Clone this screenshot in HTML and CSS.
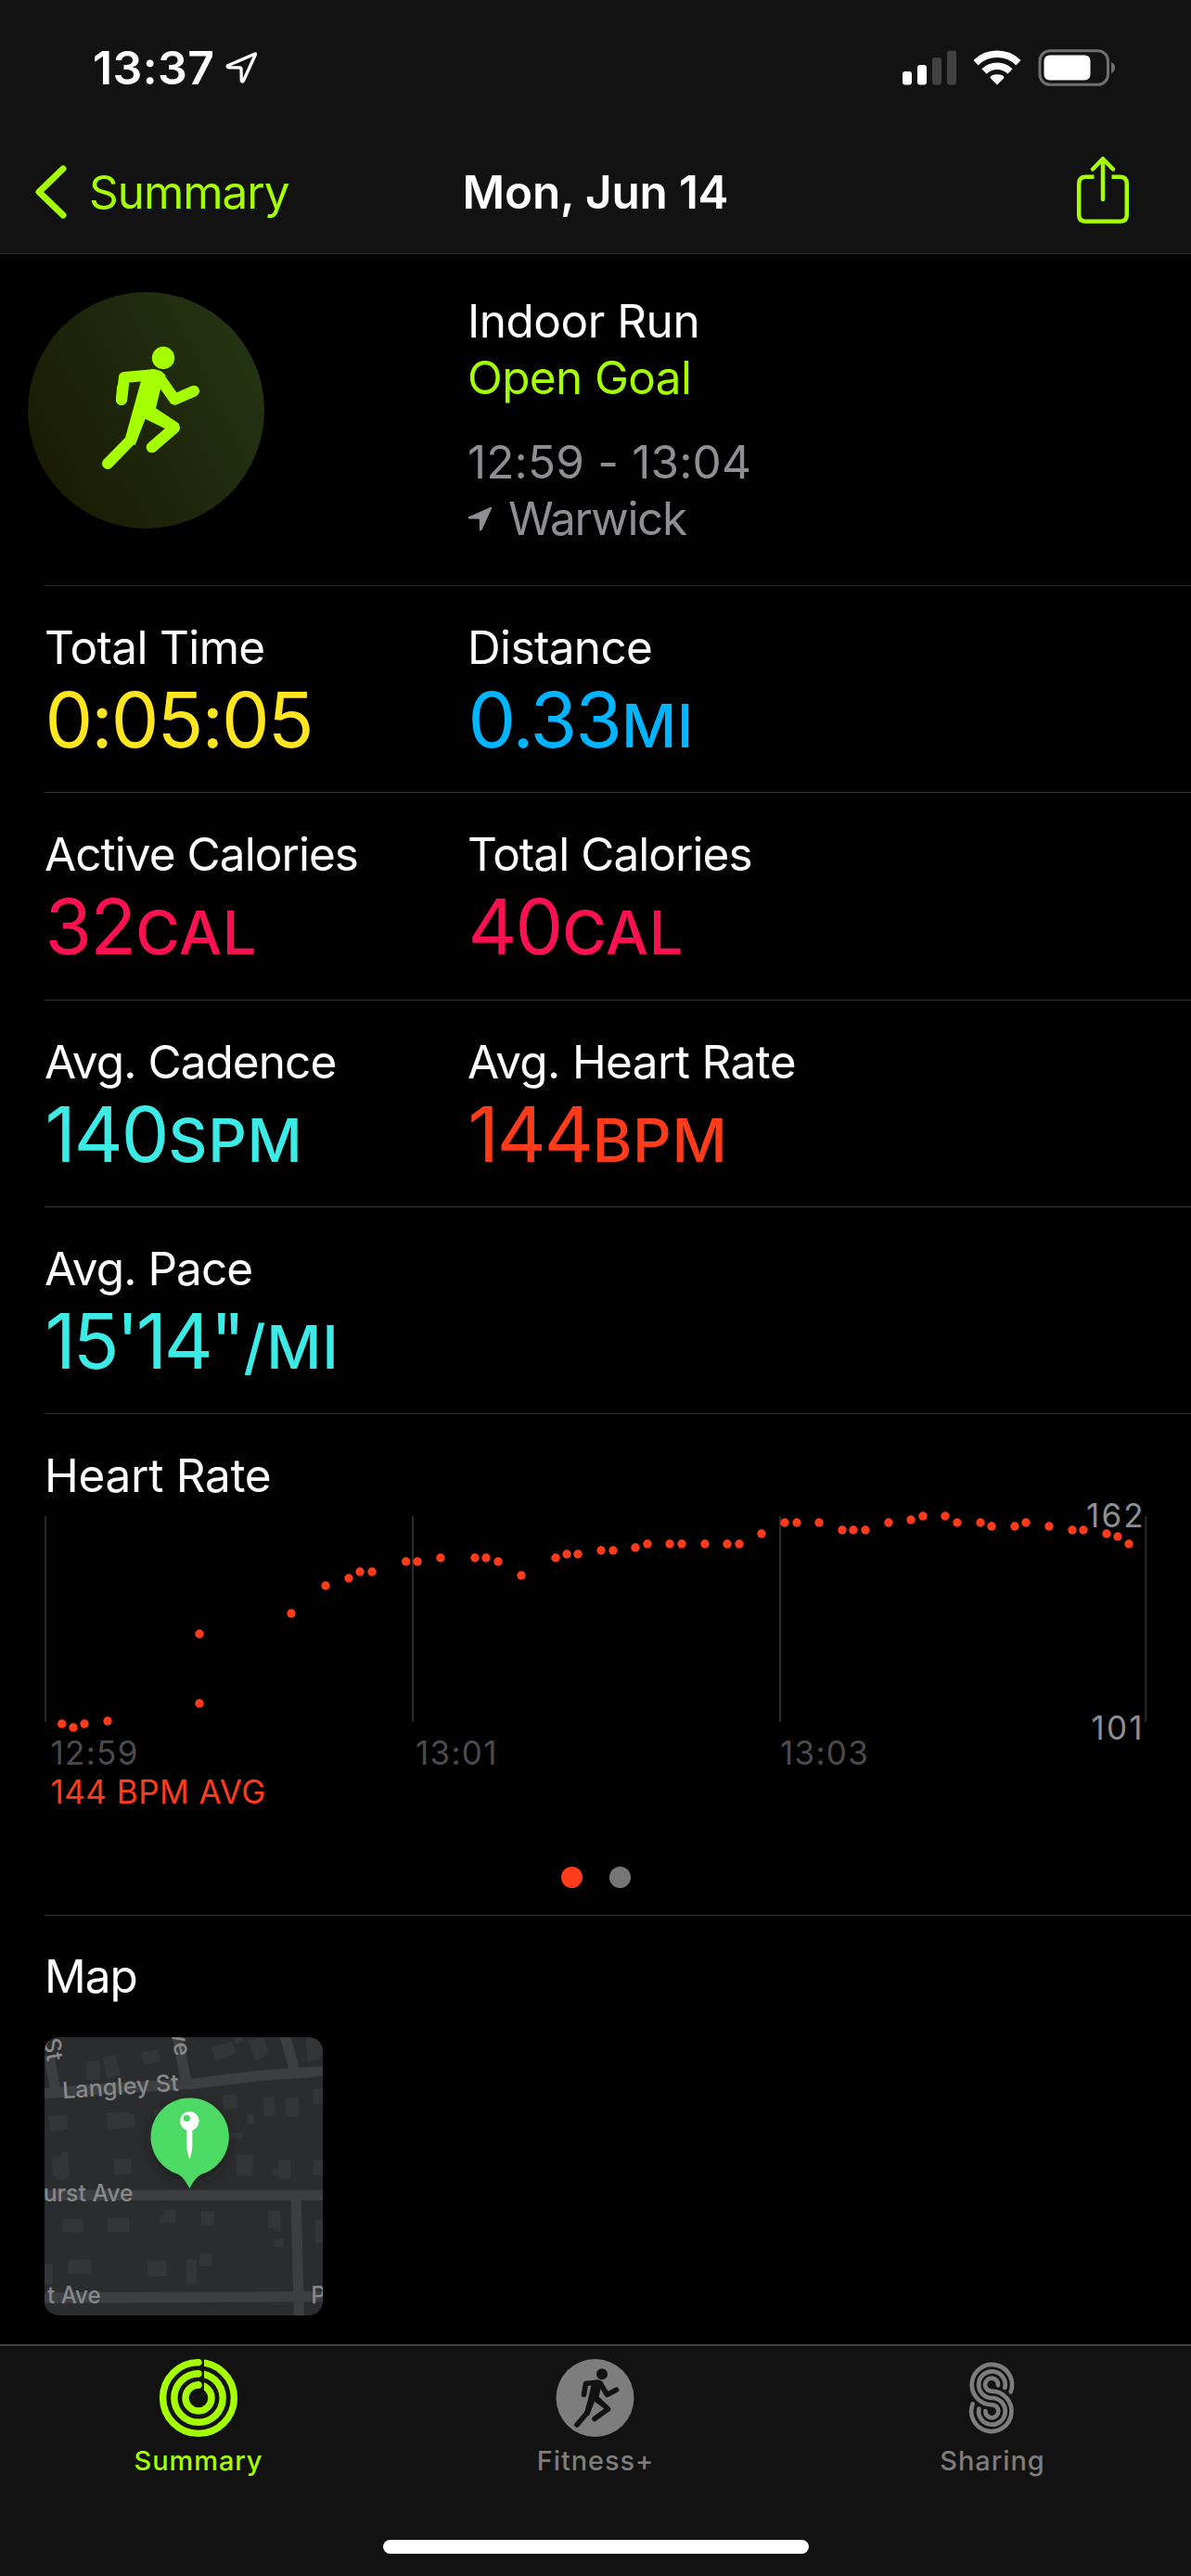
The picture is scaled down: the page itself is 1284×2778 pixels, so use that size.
FILE: index.html
```
<!DOCTYPE html>
<html lang="en">
<head>
    <meta charset="UTF-8">
    <meta name="viewport" content="width=device-width, initial-scale=1.0">
    <title>Workout Summary</title>
    <link rel="stylesheet" href="styles.css">
</head>
<body>
    <header class="header">
        <div class="status-bar">
            <span class="clock">13:37</span>
            <svg class="location" width="36" height="36" viewBox="0 0 36 36">
                <path d="M33 3 L3.500 15.800 Q2.500 17.300 4.500 17.800 L16.500 18 Q18 18 18 19.500 L18.300 32 Q19.200 34 20.500 32 L33.300 4 Q33.800 2.800 33 3 Z" fill="none" stroke="#fff" stroke-width="3.300" stroke-linejoin="round"/>
            </svg>
            <div class="status-icons">
                <svg width="58" height="38" viewBox="0 0 58 38">
                    <rect x="0" y="23" width="10" height="14.500" rx="3" fill="#fff"/>
                    <rect x="16" y="16" width="10" height="21.500" rx="3" fill="#fff"/>
                    <rect x="32" y="8" width="10" height="29.500" rx="3" fill="#414141"/>
                    <rect x="48" y="0.500" width="10" height="37" rx="3" fill="#414141"/>
                </svg>
                <svg width="52" height="38" viewBox="0 0 52 38">
                    <path d="M3 13.700 A33 33 0 0 1 49 13.700" fill="none" stroke="#fff" stroke-width="7.500"/>
                    <path d="M12 23 A20 20 0 0 1 40 23" fill="none" stroke="#fff" stroke-width="7.500"/>
                    <path d="M26 37.500 L18.500 30 Q18.500 26.300 26 26.300 Q33.500 26.300 33.500 30 Z" fill="#fff"/>
                </svg>
                <svg width="84" height="40" viewBox="0 0 84 40">
                    <rect x="2" y="1.700" width="73.500" height="36.600" rx="11" fill="none" stroke="#707070" stroke-width="3"/>
                    <rect x="6.500" y="6.500" width="50" height="27" rx="6" fill="#fff"/>
                    <path d="M79 14 Q83 15.500 83 20 Q83 24.500 79 26 Z" fill="#707070"/>
                </svg>
            </div>
        </div>
        <nav class="nav-bar">
            <a class="back">
                <svg width="36" height="58" viewBox="0 0 36 58">
                    <path d="M31 4 L5 29 L31 54" fill="none" stroke="#a6ff00" stroke-width="7" stroke-linecap="round" stroke-linejoin="round"/>
                </svg>
                <span>Summary</span>
            </a>
            <h1 class="title">Mon, Jun 14</h1>
            <svg class="share" width="58" height="74" viewBox="0 0 58 74">
                <g fill="none" stroke="#a6ff00" stroke-width="4.500" stroke-linecap="round" stroke-linejoin="round">
                    <path d="M19.500 22.700 H10.500 Q3.200 22.700 3.200 30 V63.500 Q3.200 70.800 10.500 70.800 H47.500 Q54.800 70.800 54.800 63.500 V30 Q54.800 22.700 47.500 22.700 H38.500" stroke-linecap="butt"/>
                    <path d="M29 47 V3.500 M18 14.500 L29 3.200 L40 14.500"/>
                </g>
            </svg>
        </nav>
    </header>

    <main class="content">
        <section class="workout">
            <div class="badge">
                <svg width="255" height="255" viewBox="90 75 765 765">
                    <g fill="#a6ff00" stroke="none">
                        <circle cx="528" cy="288" r="36.500"/>
                        <path d="M456 362 L405 547 L437 571 L470 485 L540 520 L580 503 Q578 500 572 496 L504 451 L520 385 L536 345 Q520 324 490 324 Z"/>
                    </g>
                    <g fill="none" stroke="#a6ff00" stroke-width="36" stroke-linecap="round" stroke-linejoin="round">
                        <path d="M393 423 L402 351 L493 343"/>
                        <path d="M393 423 L396 385"/>
                        <path d="M512 347 L565 422 L627 395"/>
                        <path d="M560 512 L564 514 L491 577"/>
                        <path d="M420 556 L348 630"/>
                    </g>
                </svg>
            </div>
            <div class="workout-info">
                <div class="label run">Indoor Run</div>
                <div class="label goal">Open Goal</div>
                <div class="label muted time">12:59 - 13:04</div>
                <div class="label muted place">
                    <svg width="27" height="28" viewBox="0 0 27 28">
                        <path d="M24.500 1 Q26.500 0.300 26 2.500 L15.500 25.500 Q14 27.500 13 25.500 L12.800 14.500 Q12.800 13.800 12 13.800 L1.500 13.500 Q-0.500 12.500 1.500 11.300 Z" fill="#8e8e93"/>
                    </svg>
                    <span>Warwick</span>
                </div>
            </div>
        </section>

        <section class="row">
            <div class="metric">
                <div class="label">Total Time</div>
                <div class="value yellow">0:05:05</div>
            </div>
            <div class="metric">
                <div class="label">Distance</div>
                <div class="value blue">0.33<span class="unit">MI</span></div>
            </div>
        </section>
        <section class="row">
            <div class="metric">
                <div class="label tight">Active Calories</div>
                <div class="value pink">32<span class="unit">CAL</span></div>
            </div>
            <div class="metric">
                <div class="label tight">Total Calories</div>
                <div class="value pink">40<span class="unit">CAL</span></div>
            </div>
        </section>
        <section class="row">
            <div class="metric">
                <div class="label tight">Avg. Cadence</div>
                <div class="value cyan">140<span class="unit">SPM</span></div>
            </div>
            <div class="metric">
                <div class="label">Avg. Heart Rate</div>
                <div class="value red">144<span class="unit">BPM</span></div>
            </div>
        </section>
        <section class="row">
            <div class="metric">
                <div class="label tight">Avg. Pace</div>
                <div class="value cyan pace">15'14"<span class="unit">/MI</span></div>
            </div>
        </section>

        <section class="heart-rate">
            <h2 class="label loose">Heart Rate</h2>
            <svg id="chart" class="chart" width="1236" height="340" viewBox="48 1620 1236 340">
                <g class="grid-lines">
                    <path d="M48.800 1635 V1857 M445 1635 V1857 M841 1635 V1857 M1235.300 1635 V1857"/>
                </g>
                <g id="dots" fill="#ff3b1b"></g>
                <g class="axis">
                    <text x="54.500" y="1903">12:59</text>
                    <text x="448" y="1903">13:01</text>
                    <text x="841" y="1903">13:03</text>
                </g>
                <g class="range">
                    <text x="1171" y="1647">162</text>
                    <text x="1176.500" y="1876">101</text>
                </g>
                <text class="average" x="54.500" y="1945">144 BPM AVG</text>
            </svg>
            <div class="pager">
                <span class="page active"></span>
                <span class="page"></span>
            </div>
        </section>

        <section class="map-section">
            <h2 class="label tight">Map</h2>
            <svg class="map" width="300" height="300" viewBox="144 411 900 900">
                <defs>
                    <filter id="shadow" x="-50%" y="-50%" width="200%" height="200%">
                        <feGaussianBlur stdDeviation="16"/>
                    </filter>
                </defs>
                <rect x="144" y="411" width="900" height="900" fill="#2b2c2e"/>
                <g fill="#343537">
                    <path d="M276 491 L321 488 L325 547 L281 550 Z M332 477 L374 467 L388 535 L346 546 Z M457 460 L511 450 L518 490 L465 501 Z"/>
                    <path d="M685 443 L752 424 L764 463 L698 489 Z M753 414 L785 411 L789 423 L762 433 Z M803 423 L850 408 L867 455 L850 478 L826 487 Z M988 415 L1044 411 V467 L1028 485 L996 487 Z"/>
                    <path d="M157 667 L216 661 L220 709 L162 716 Z M345 657 L398 652 L434 660 L438 697 L424 704 L349 711 Z M718 600 L764 594 L769 639 L724 645 Z M850 607 L887 604 L891 665 L855 668 Z M921 608 L965 605 L970 667 L926 669 Z M1010 580 L1044 575 V625 L1014 627 Z M798 660 H822 V690 H798 Z M735 722 L784 719 V738 L738 740 Z"/>
                    <path d="M167 797 L197 795 V779 H219 L225 855 L209 872 H183 V862 L170 860 Z M369 804 H424 V854 H369 Z M767 788 L819 793 L814 861 L763 855 Z M900 807 H939 V868 L902 870 V857 L880 855 V838 L900 836 Z M1012 808 H1044 V856 H1012 Z M498 645 L530 640 V670 H500 Z"/>
                    <path d="M203 997 L271 999 V1044 L202 1042 Z M348 996 H418 V1041 H348 Z M516 988 L531 986 V970 H567 V1012 L517 1014 Z M651 975 H693 V1020 H651 Z M867 973 L906 971 L909 1038 H886 V1029 H867 Z M888 1063 H918 V1090 H888 Z M1020 1002 H1044 V1078 H1019 Z"/>
                    <path d="M222 1129 L296 1131 V1179 L221 1177 Z M144 1143 H171 V1211 H144 Z M477 1135 L537 1133 L540 1185 H478 Z M602 1128 L636 1130 V1208 L600 1206 Z M646 1109 H685 V1152 H645 Z"/>
                </g>
                <g fill="none" stroke="#3d3e42" stroke-width="34">
                    <path d="M144 593 L360 576 L620 562 L840 535 L1044 521"/>
                    <path d="M158 470 L182 590 M572 400 L603 560 M920 400 L955 525"/>
                    <path d="M144 922 H1044 M144 1254 L1044 1250 M957 925 L967 1311"/>
                </g>
                <g class="street">
                    <text transform="translate(203 610) rotate(-4)" textLength="378" lengthAdjust="spacingAndGlyphs">Langley St</text>
                    <text x="140" y="941" textLength="291" lengthAdjust="spacingAndGlyphs">urst Ave</text>
                    <text x="153" y="1273" textLength="173" lengthAdjust="spacingAndGlyphs">t Ave</text>
                    <text x="1006" y="1271">P</text>
                    <text transform="translate(140 418) rotate(80)">St</text>
                    <text transform="translate(552 390) rotate(80)">ve</text>
                </g>
                <circle cx="613" cy="750" r="128" fill="#151618" opacity="0.550" filter="url(#shadow)"/>
                <path d="M613 900 Q597 868 578 855 A126.500 126.500 0 1 1 650 855 Q629 868 613 900 Z" fill="#4cda64"/>
                <path d="M604 705 H622 V765 Q620 790 613 805 Q606 790 604 765 Z" fill="#fff"/>
                <circle cx="613" cy="682" r="31" fill="#fff"/>
                <circle cx="604" cy="673" r="11" fill="#4cda64"/>
            </svg>
        </section>
    </main>

    <footer class="tab-bar">
        <div class="tabs">
            <div class="tab selected">
                <svg width="86" height="86" viewBox="0 0 86 86">
                    <g fill="none" stroke="#a6ff00" stroke-width="7.400">
                        <circle cx="43" cy="43" r="38.400"/>
                        <circle cx="43" cy="43" r="26.200"/>
                        <circle cx="43" cy="43" r="14"/>
                    </g>
                    <path d="M46.500 0 V36" stroke="#121212" stroke-width="5"/>
                    <g fill="#a6ff00">
                        <circle cx="43" cy="4.600" r="3.700"/>
                        <circle cx="43" cy="16.800" r="3.700"/>
                        <circle cx="43" cy="29" r="3.700"/>
                    </g>
                </svg>
                <span>Summary</span>
            </div>
            <div class="tab">
                <svg width="86" height="86" viewBox="0 0 86 86">
                    <circle cx="42.500" cy="43" r="42" fill="#7d7d7d"/>
                    <circle cx="50" cy="17.200" r="6" fill="#121212"/>
                    <path d="M38.500 29 L35 44 L31 59 L36 62 L42 47 L49 52 L56 53 L46.500 42 L50 27 L46 24 Z" fill="#121212"/>
                    <g fill="none" stroke="#121212" stroke-width="5.600" stroke-linecap="round" stroke-linejoin="round">
                        <path d="M30.500 39.500 L32.500 27.500 L46 26"/>
                        <path d="M48 27 L55.500 39.500 L65.500 34.300"/>
                        <path d="M46 45 L56.500 55 L42 65.500"/>
                        <path d="M34 59 L23 72"/>
                    </g>
                </svg>
                <span>Fitness+</span>
            </div>
            <div class="tab">
                <svg width="86" height="86" viewBox="200 69 258 258">
                    <g fill="none" stroke="#7d7d7d" stroke-width="14" stroke-linecap="round">
                        <path d="M388 178 A65 65 0 1 0 327 220 A21 21 0 1 1 306 240"/>
                        <path d="M369 165 A43 43 0 1 0 327 198 A43 43 0 1 1 285 233"/>
                        <path d="M347 157 A21 21 0 1 0 327 176 A65 65 0 1 1 265 217"/>
                    </g>
                </svg>
                <span>Sharing</span>
            </div>
        </div>
        <div class="home-indicator"></div>
    </footer>

    <script>
        // heart rate samples as [x, y] on the chart
        const samples = [
            [66.7, 1859], [79, 1863], [91, 1859], [116, 1856], [215, 1837], [215, 1762], [314, 1740], [351, 1710],
            [376, 1702], [388, 1695], [401, 1695], [437.7, 1684], [450, 1684], [475, 1680], [512, 1680], [524, 1680],
            [537, 1684], [562, 1699], [599, 1680], [611, 1676], [623, 1676], [648, 1672], [661, 1672], [685, 1669],
            [698, 1665], [722, 1665], [735, 1665], [760, 1665], [784, 1665], [797, 1665], [821, 1654], [846, 1642],
            [859, 1642], [883, 1642], [908, 1650], [920, 1650], [933, 1650], [958, 1642], [982, 1639], [995, 1635],
            [1019, 1635], [1032, 1642], [1057, 1642], [1069, 1646], [1094, 1646], [1106, 1642], [1131, 1646],
            [1156, 1650], [1168, 1650], [1193, 1654], [1205, 1657], [1217, 1665]
        ];

        const dots = document.getElementById('dots');
        for (const [x, y] of samples) {
            const dot = document.createElementNS('http://www.w3.org/2000/svg', 'circle');
            dot.setAttribute('cx', x);
            dot.setAttribute('cy', y);
            dot.setAttribute('r', 4.7);
            dots.appendChild(dot);
        }
    </script>
</body>
</html>
```
FILE: styles.css
```
* {
    box-sizing: border-box;
}
body {
    margin: 0;
    width: 1284px;
    height: 2778px;
    display: flex;
    flex-direction: column;
    overflow: hidden;
    background: #000;
    color: #fff;
    font-family: Inter, "Liberation Sans", sans-serif;
}
svg {
    display: block;
    flex-shrink: 0;
}
h1, h2 {
    margin: 0;
}

/* Header */
.header {
    height: 274px;
    background: #121212;
    border-bottom: 1px solid #2a2a2a;
}
.status-bar {
    height: 146px;
    padding: 0 81px 0 100px;
    display: flex;
    align-items: center;
}
.clock {
    font-size: 50px;
    font-weight: 600;
    letter-spacing: 0.4px;
}
.location {
    margin-left: 10px;
}
.status-icons {
    margin-left: auto;
    display: flex;
    align-items: center;
    gap: 18px;
}
.nav-bar {
    height: 122px;
    padding: 0 66px 0 37px;
    display: grid;
    grid-template-columns: 1fr auto 1fr;
    align-items: center;
    font-size: 49.5px;
}
.back {
    display: flex;
    align-items: center;
    gap: 23px;
    color: #a6ff00;
    letter-spacing: -1.05px;
}
.title {
    font-size: 49.5px;
    font-weight: 600;
    letter-spacing: -0.2px;
    margin-left: 29px;
}
.share {
    justify-self: end;
    margin-top: -4px;
}

/* Workout details */
.content {
    flex: 1;
    padding-left: 48px;
}
.label {
    font-size: 49.5px;
    font-weight: 400;
    line-height: 61px;
    letter-spacing: -0.65px;
    white-space: nowrap;
}
.label.tight {
    letter-spacing: -0.95px;
}
.label.loose {
    letter-spacing: -0.3px;
}
.workout {
    height: 358px;
    display: grid;
    grid-template-columns: 456px 1fr;
    border-bottom: 1px solid #303032;
}
.badge {
    width: 255px;
    height: 255px;
    margin: 41px 0 0 -18px;
    border-radius: 50%;
    background: linear-gradient(62deg, #191c02 12%, #1f260c 50%, #243413 90%);
}
.workout-info {
    padding-top: 42px;
}
.run {
    letter-spacing: -0.5px;
}
.goal {
    color: #a6ff00;
}
.muted {
    color: #8e8e93;
}
.time {
    margin-top: 30px;
    letter-spacing: 0.15px;
}
.place {
    display: flex;
    align-items: center;
    gap: 17px;
    letter-spacing: -1.3px;
}
.row {
    height: 223.25px;
    padding-top: 36px;
    display: grid;
    grid-template-columns: 456px 1fr;
    align-items: start;
    border-bottom: 1px solid #303032;
}
.value {
    margin: 3px 0 0 0.5px;
    font-size: 82px;
    line-height: 90px;
    letter-spacing: -2px;
    white-space: nowrap;
}
.unit {
    margin-left: 1px;
    font-size: 65px;
    font-weight: 500;
    line-height: 1;
    letter-spacing: 0.6px;
}
.pace {
    letter-spacing: -3.2px;
}
.yellow { color: #ffe620; }
.blue { color: #00b4ff; }
.pink { color: #fa114f; }
.cyan { color: #3ceae6; }
.red { color: #ff3b1b; }

/* Heart rate chart */
.heart-rate {
    height: 541px;
    padding-top: 36px;
    border-bottom: 1px solid #303032;
}
.chart {
    margin-top: -2px;
}
.grid-lines {
    stroke: #2c2c2c;
    stroke-width: 2;
}
.axis, .range, .average {
    font-size: 35px;
    letter-spacing: 1.3px;
}
.axis {
    fill: #4b4b4d;
}
.range {
    fill: #8e8e93;
    letter-spacing: 2.2px;
}
.average {
    fill: #ff3b1b;
    letter-spacing: 0.5px;
}
.pager {
    margin: 53px 0 0 -48px;
    display: flex;
    justify-content: center;
    gap: 29px;
}
.page {
    width: 23px;
    height: 23px;
    border-radius: 50%;
    background: #757575;
}
.page.active {
    background: #ff3b1b;
}

/* Map */
.map-section {
    padding-top: 35px;
}
.map {
    margin-top: 35px;
    border-radius: 15px;
}
.street {
    font-size: 75px;
    font-weight: 500;
    fill: #86888a;
}

/* Tab bar */
.tab-bar {
    height: 250px;
    background: #121212;
    border-top: 2px solid #3f3f3f;
}
.tabs {
    height: 209px;
    padding-top: 13px;
    display: grid;
    grid-template-columns: repeat(3, 1fr);
}
.tab {
    display: flex;
    flex-direction: column;
    align-items: center;
    gap: 7px;
    color: #7d7d7d;
    font-size: 29px;
    font-weight: 500;
    line-height: 35px;
    letter-spacing: 0.9px;
}
.tab.selected {
    color: #a6ff00;
}
.home-indicator {
    width: 459px;
    height: 15px;
    margin: 0 auto;
    border-radius: 8px;
    background: #fff;
}
```
